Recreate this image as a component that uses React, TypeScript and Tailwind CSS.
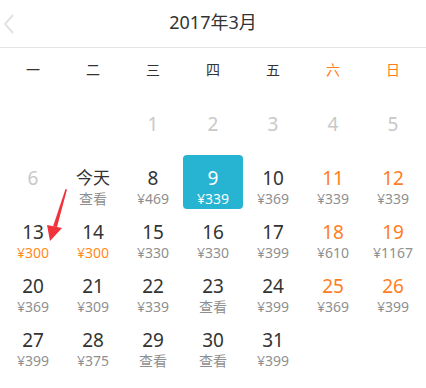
import React from "react";

type Day = {
  label: string;
  price?: string;
  muted?: boolean;
  weekend?: boolean;
  hot?: boolean;
  selected?: boolean;
};

const weekdays = ["一", "二", "三", "四", "五", "六", "日"];

// first row: 1-5 fall on wed..sun, the leading cells stay blank
const days: (Day | null)[] = [
  null,
  null,
  { label: "1", muted: true },
  { label: "2", muted: true },
  { label: "3", muted: true },
  { label: "4", muted: true },
  { label: "5", muted: true },
  { label: "6", muted: true },
  { label: "今天", price: "查看" },
  { label: "8", price: "¥469" },
  { label: "9", price: "¥339", selected: true },
  { label: "10", price: "¥369" },
  { label: "11", price: "¥339", weekend: true },
  { label: "12", price: "¥339", weekend: true },
  { label: "13", price: "¥300", hot: true },
  { label: "14", price: "¥300", hot: true },
  { label: "15", price: "¥330" },
  { label: "16", price: "¥330" },
  { label: "17", price: "¥399" },
  { label: "18", price: "¥610", weekend: true },
  { label: "19", price: "¥1167", weekend: true },
  { label: "20", price: "¥369" },
  { label: "21", price: "¥309" },
  { label: "22", price: "¥339" },
  { label: "23", price: "查看" },
  { label: "24", price: "¥399" },
  { label: "25", price: "¥369", weekend: true },
  { label: "26", price: "¥399", weekend: true },
  { label: "27", price: "¥399" },
  { label: "28", price: "¥375" },
  { label: "29", price: "查看" },
  { label: "30", price: "查看" },
  { label: "31", price: "¥399" },
];

const DayCell = ({ day }: { day: Day | null }) => {
  if (!day) return <div className="h-[54px]" />;

  const numColor = day.selected
    ? "text-white"
    : day.muted
      ? "text-[#c8c8c8]"
      : day.weekend
        ? "text-[#ff7d1e]"
        : "text-[#333]";
  const priceColor = day.selected
    ? "text-white"
    : day.hot
      ? "text-[#ff8a1e]"
      : "text-[#8f8f8f]";
  const isToday = day.label === "今天";

  return (
    <div
      className={`h-[54px] flex flex-col items-center pt-[12px] ${
        day.selected ? "bg-[#26b4d2] rounded-[4px]" : ""
      }`}
    >
      <span
        className={`${isToday ? "text-[17px]" : "text-[19px]"} leading-[22px] ${numColor}`}
      >
        {day.label}
      </span>
      {day.price && (
        <span className={`text-[14px] leading-[19px] ${priceColor}`}>
          {day.price}
        </span>
      )}
    </div>
  );
};

export default function App() {
  return (
    <div
      className="w-[426px] h-[388px] bg-white overflow-hidden"
      style={{ fontFamily: '"Noto Sans", "Noto Sans CJK SC", sans-serif' }}
    >
      {/* month header */}
      <div className="relative h-[48px] flex items-center justify-center border-b border-[#e3e3e3]">
        <svg
          className="absolute left-[3px] top-[14px]"
          width="12"
          height="20"
          viewBox="0 0 12 20"
        >
          <path
            d="M10 1 L2 10 L10 19"
            fill="none"
            stroke="#e2e2e2"
            strokeWidth="2"
          />
        </svg>
        <span className="text-[18px] text-[#333] pb-[3px]">2017年3月</span>
      </div>

      {/* weekday names */}
      <div className="grid grid-cols-7 px-[3px] h-[43px] items-center">
        {weekdays.map((w, i) => (
          <span
            key={w}
            className={`text-center text-[14px] ${
              i >= 5 ? "text-[#ff7d1e]" : "text-[#333]"
            }`}
          >
            {w}
          </span>
        ))}
      </div>

      <div className="relative pt-[10px]">
        <div className="grid grid-cols-7 px-[3px]">
          {days.map((d, i) => (
            <DayCell key={i} day={d} />
          ))}
        </div>

        {/* red pointer arrow over the 13th */}
        <svg
          className="absolute left-[36px] top-[98px]"
          width="34"
          height="54"
          viewBox="0 0 34 54"
        >
          <polygon points="29.5,0 31,0.5 21,38 17,37.5" fill="#f2323a" />
          <polygon points="11,36 26,39 14,52" fill="#f2323a" />
        </svg>
      </div>
    </div>
  );
}
